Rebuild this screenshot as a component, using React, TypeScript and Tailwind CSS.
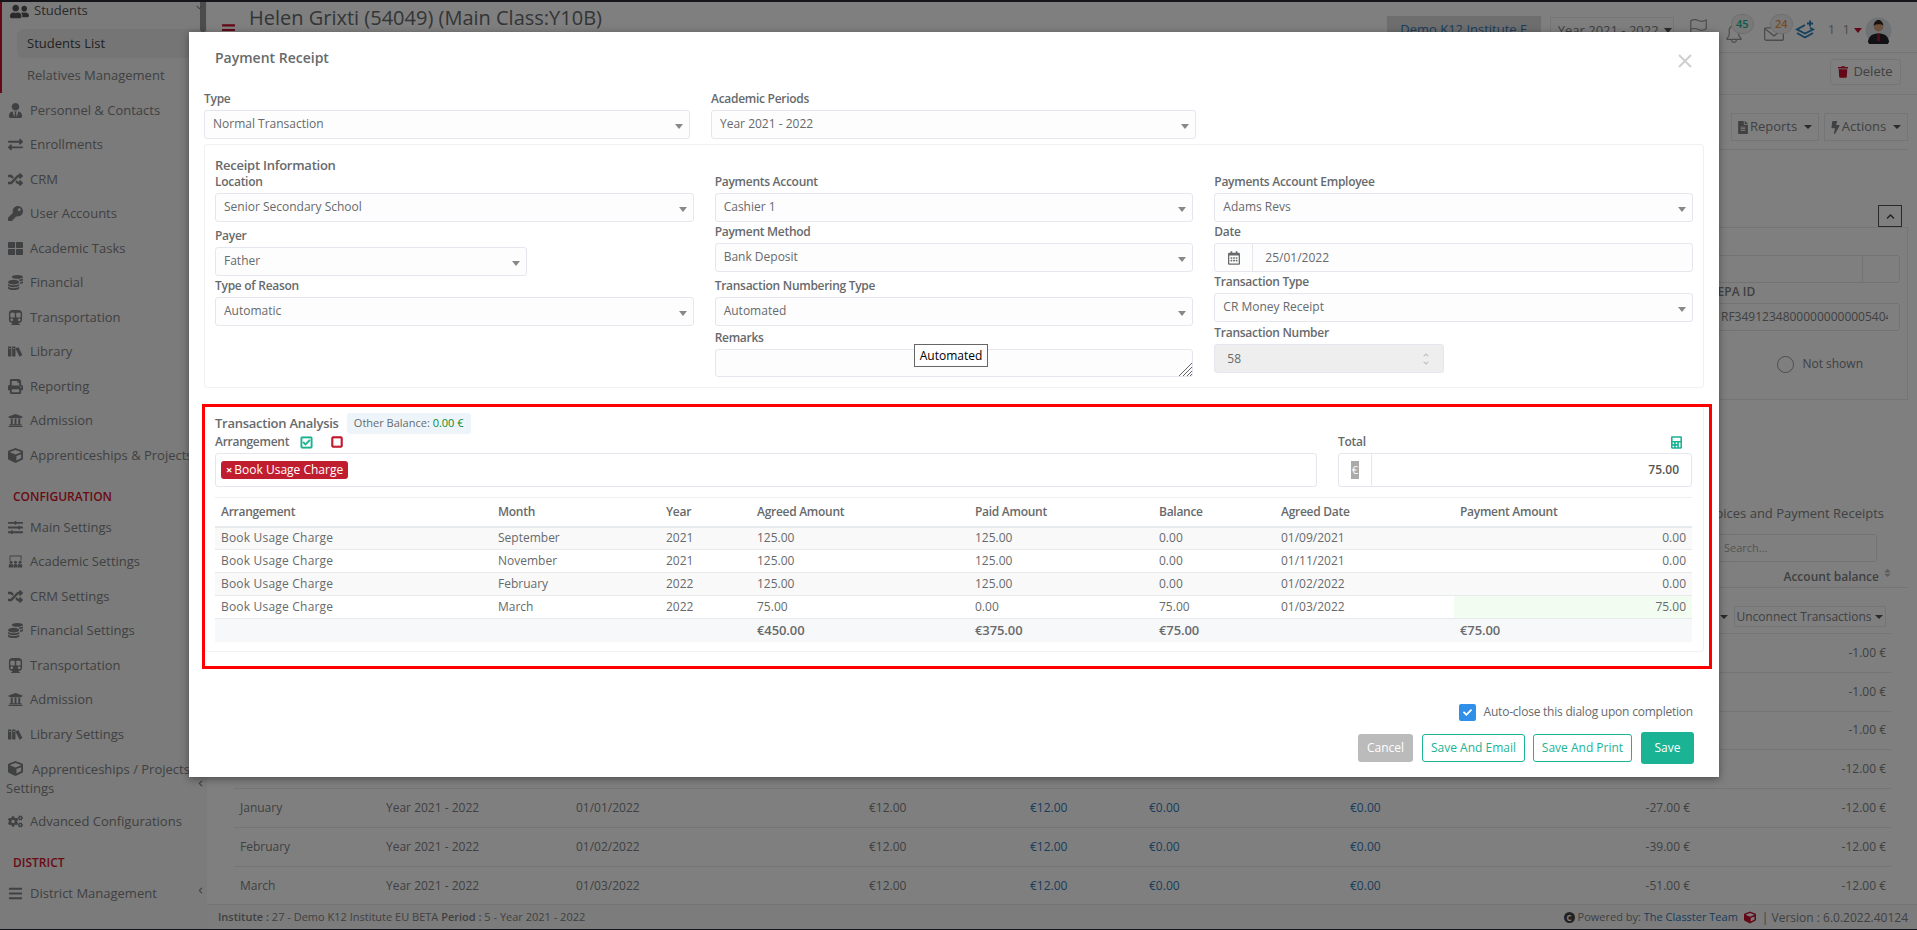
import React from 'react';
import {
  FaBars, FaBolt, FaCalculator, FaChevronDown, FaChevronLeft, FaChevronUp, FaCheck, FaCogs, FaCoins, FaCube,
  FaExchangeAlt, FaFileAlt, FaKey, FaPrint, FaRandom, FaRegCalendarAlt, FaRegCheckSquare,
  FaRegSquare, FaSlidersH, FaSort, FaSubway, FaThLarge, FaTrash, FaUniversity,
  FaUserFriends, FaUserTie,
} from 'react-icons/fa';
import { ImBooks } from 'react-icons/im';
import { SlBell, SlEnvolope, SlFlag } from 'react-icons/sl';

const ClassroomIcon = ({ className }: { className?: string }) => (
  <svg viewBox="0 0 20 18" className={className} fill="currentColor">
    <path d="M2 8V1h16v7h-1.2V2.2H3.2V8z" />
    <circle cx="4" cy="10" r="2" />
    <circle cx="10" cy="10" r="2" />
    <circle cx="16" cy="10" r="2" />
    <path d="M1 17v-3a2 2 0 0 1 2-1.5h2A2 2 0 0 1 7 14v3zM7.5 17v-3a2 2 0 0 1 2-1.5h1a2 2 0 0 1 2 1.5v3zM13 17v-3a2 2 0 0 1 2-1.5h2a2 2 0 0 1 2 1.5v3z" />
  </svg>
);

const LayersPlusIcon = ({ className }: { className?: string }) => (
  <svg viewBox="0 0 20 20" className={className} fill="none" stroke="currentColor" strokeWidth="1.8">
    <path d="M10 5L2 9.5l8 4 8-4-3-1.6" />
    <path d="M2 13l8 4.5 8-4.5" />
    <path d="M15 0.5v6M12 3.5h6" />
  </svg>
);

const mainItems = [
  { label: 'Personnel & Contacts', icon: FaUserTie },
  { label: 'Enrollments', icon: FaExchangeAlt },
  { label: 'CRM', icon: FaRandom },
  { label: 'User Accounts', icon: FaKey },
  { label: 'Academic Tasks', icon: FaThLarge },
  { label: 'Financial', icon: FaCoins },
  { label: 'Transportation', icon: FaSubway },
  { label: 'Library', icon: ImBooks },
  { label: 'Reporting', icon: FaPrint },
  { label: 'Admission', icon: FaUniversity },
  { label: 'Apprenticeships & Projects', icon: FaCube },
];

const configItems = [
  { label: 'Main Settings', icon: FaSlidersH },
  { label: 'Academic Settings', icon: ClassroomIcon },
  { label: 'CRM Settings', icon: FaRandom },
  { label: 'Financial Settings', icon: FaCoins },
  { label: 'Transportation', icon: FaSubway },
  { label: 'Admission', icon: FaUniversity },
  { label: 'Library Settings', icon: ImBooks },
];

const arrangementRows = [
  { month: 'September', year: '2021', agreed: '125.00', paid: '125.00', balance: '0.00', date: '01/09/2021', payment: '0.00' },
  { month: 'November', year: '2021', agreed: '125.00', paid: '125.00', balance: '0.00', date: '01/11/2021', payment: '0.00' },
  { month: 'February', year: '2022', agreed: '125.00', paid: '125.00', balance: '0.00', date: '01/02/2022', payment: '0.00' },
  { month: 'March', year: '2022', agreed: '75.00', paid: '0.00', balance: '75.00', date: '01/03/2022', payment: '75.00' },
];

const balanceRows = [
  { month: '', date: '', total: '', balance: '-1.00 €' },
  { month: '', date: '', total: '', balance: '-1.00 €' },
  { month: '', date: '', total: '', balance: '-1.00 €' },
  { month: '', date: '', total: '', balance: '-12.00 €' },
  { month: 'January', date: '01/01/2022', total: '-27.00 €', balance: '-12.00 €' },
  { month: 'February', date: '01/02/2022', total: '-39.00 €', balance: '-12.00 €' },
  { month: 'March', date: '01/03/2022', total: '-51.00 €', balance: '-12.00 €' },
];

const SideItem = ({ label, icon: Icon }: { label: string; icon: React.ComponentType<{ className?: string }> }) => (
  <div className="flex h-[34.5px] items-center pl-2 text-[13px] text-[#808284]">
    <Icon className="h-[15px] w-[15px] shrink-0" />
    <span className="ml-[7px] whitespace-nowrap">{label}</span>
  </div>
);

const SectionTitle = ({ children }: { children: React.ReactNode }) => (
  <div className="mt-[15px] mb-[5.5px] h-[17px] pl-[13px] text-[12px] leading-[17px] font-semibold text-[#d4152f]">{children}</div>
);

const Sidebar = () => (
  <aside className="relative w-[207px] shrink-0 overflow-hidden bg-[#f6f6f6]">
    <div className="absolute top-0 right-[1px] h-[32px] w-[6px] rounded-sm bg-[#999]" />
    <FaChevronDown className="absolute top-[4px] left-[196px] h-[7px] w-[7px] text-[#888]" />
    <FaChevronLeft className="absolute top-[780px] left-[197px] h-[7px] w-[7px] text-[#888]" />
    <FaChevronLeft className="absolute top-[887px] left-[197px] h-[7px] w-[7px] text-[#888]" />
    <div className="h-[93px] border-l-2 border-[#c8102e]">
      <div className="flex h-[29px] items-center pb-[7px] pl-2 text-[13px] text-[#555]">
        <FaUserFriends className="h-[17px] w-[19px] shrink-0" />
        <span className="ml-[5px]">Students</span>
      </div>
      <div className="ml-[15px] flex h-[29px] items-center rounded-l-md bg-[#ebebeb] pl-[10px] text-[13px] text-[#444]">Students List</div>
      <div className="flex h-[35px] items-center pl-[25px] text-[13px] text-[#808284]">Relatives Management</div>
    </div>
    {mainItems.map((item) => (
      <SideItem key={item.label} {...item} />
    ))}
    <SectionTitle>CONFIGURATION</SectionTitle>
    {configItems.map((item) => (
      <SideItem key={item.label} {...item} />
    ))}
    <div className="h-[53px] pt-[8px] pl-[6px] text-[13px] leading-[19px] text-[#808284]">
      <FaCube className="mr-[9px] ml-[2px] inline h-[15px] w-[15px] align-[-2px]" />
      Apprenticeships / Projects
      <br />
      Settings
    </div>
    <SideItem label="Advanced Configurations" icon={FaCogs} />
    <SectionTitle>DISTRICT</SectionTitle>
    <SideItem label="District Management" icon={FaBars} />
  </aside>
);

const Avatar = () => (
  <svg viewBox="0 0 28 28" className="h-[27px] w-[27px]">
    <circle cx="14" cy="14" r="13.5" fill="#dfe5ea" />
    <path d="M3 26c1-7 5-9 11-9s10 2 11 9a13 13 0 0 1-22 0z" fill="#20232b" />
    <path d="M13 17h2l.8 7-1.8 2-1.8-2z" fill="#b3122a" />
    <circle cx="14" cy="10" r="5" fill="#d9a27f" />
    <path d="M9 9c0-4 3-6 5-6s5 2 5 6c-2-2-7-2-10 0z" fill="#3a2418" />
  </svg>
);

const CountBadge = ({ value, className }: { value: string; className: string }) => (
  <span className={`absolute -top-[10px] left-[6px] flex h-[20px] w-[23px] items-center justify-center rounded-full border border-[#ddd] bg-[#f3f3f3] text-[11px] font-semibold ${className}`}>
    {value}
  </span>
);

const TopBar = () => (
  <header className="flex h-[53px] shrink-0 border-b border-[#e7eaec] bg-[#fefefe]">
    <FaBars className="mt-[22px] ml-[15px] h-[16px] w-[13px] text-[#c8102e]" />
    <h1 className="mt-[4px] ml-[14px] text-[20px] leading-[28px] whitespace-nowrap text-[#676a6c]">Helen Grixti (54049) (Main Class:Y10B)</h1>
    <div className="ml-auto flex items-start pr-[25px]">
      <div className="mt-[16px] flex h-[28px] w-[154px] items-center justify-center bg-[#ddd] text-[13px] text-[#337ab7]">Demo K12 Institute E</div>
      <div className="mt-[17px] ml-[9px] flex h-[27px] w-[124px] items-center border border-[#e7eaec] pl-[7px] text-[13px] text-[#808284]">
        Year 2021 - 2022
        <span className="ml-[5px] border-x-[4px] border-t-[5px] border-x-transparent border-t-[#555]" />
      </div>
      <SlFlag className="mt-[19px] ml-[14px] h-[19px] w-[21px] text-[#999]" />
      <div className="relative mt-[24px] ml-[16px] h-[20px] w-[20px]">
        <SlBell className="h-[20px] w-[18px] text-[#999]" />
        <CountBadge value="45" className="text-[#1ab394]" />
      </div>
      <div className="relative mt-[24px] ml-[19px] h-[20px] w-[20px]">
        <SlEnvolope className="h-[20px] w-[20px] text-[#999]" />
        <CountBadge value="24" className="text-[#f0913a]" />
      </div>
      <LayersPlusIcon className="mt-[20px] ml-[11px] h-[20px] w-[20px] text-[#2a80b9]" />
      <span className="mt-[20px] ml-[13px] text-[13px] tracking-[2px] text-[#999]">1 1</span>
      <span className="mt-[28px] ml-[2px] border-x-[4px] border-t-[5px] border-x-transparent border-t-[#c8102e]" />
      <div className="mt-[17px] ml-[3px]">
        <Avatar />
      </div>
    </div>
  </header>
);

const OutlineButton = ({ children, className }: { children: React.ReactNode; className: string }) => (
  <div className={`flex items-center justify-center border border-[#e7eaec] text-[13px] text-[#808284] ${className}`}>{children}</div>
);

const MainContent = () => (
  <main className="flex min-w-0 flex-1 flex-col bg-white">
    <TopBar />
    <div className="flex h-[42px] shrink-0 items-center justify-end border-b border-[#e7eaec] pr-[16px] pb-[4px]">
      <OutlineButton className="h-[26px] w-[71px] gap-[5px] rounded-[3px]">
        <FaTrash className="h-[12px] w-[10px] text-[#c8102e]" />
        Delete
      </OutlineButton>
    </div>
    <div className="min-h-0 flex-1 overflow-hidden pr-[9px] pl-[12px]">
      <div className="mt-[18px] flex h-[28px] justify-end gap-[5px]">
        <OutlineButton className="w-[88px] gap-[2px]">
          <FaFileAlt className="h-[13px] w-[10px]" />
          Reports
          <span className="ml-[5px] border-x-[4px] border-t-[4px] border-x-transparent border-t-[#555]" />
        </OutlineButton>
        <OutlineButton className="w-[84px] gap-[2px]">
          <FaBolt className="h-[13px] w-[9px]" />
          Actions
          <span className="ml-[5px] border-x-[4px] border-t-[4px] border-x-transparent border-t-[#555]" />
        </OutlineButton>
      </div>
      <div className="mt-[8px] border-t border-[#e7eaec]" />
      <div className="mt-[55px] flex justify-end pr-[6px]">
        <div className="flex h-[22px] w-[24px] items-center justify-center border border-[#555]">
          <FaChevronUp className="h-[9px] w-[9px] text-[#444]" />
        </div>
      </div>
      <div className="relative h-[173px] overflow-hidden border border-[#e7eaec]">
        <div className="mt-[27px] mr-[7px] ml-auto flex h-[28px] w-[280px] justify-end rounded-[3px] border border-[#e5e6e7]">
          <div className="w-[37px] border-l border-[#e5e6e7]" />
        </div>
        <div className="mt-[2px] mr-[7px] ml-auto w-[189px] text-[12px] leading-[14px] font-semibold text-[#808284]">SEPA ID</div>
        <div className="mt-[4px] mr-[7px] ml-auto flex h-[28px] w-[190px] items-center rounded-[3px] border border-[#e5e6e7] pl-[10px] text-[12px] whitespace-nowrap text-[#808284]">
          <span className="w-[167px] overflow-hidden">RF34912348000000000005404</span>
        </div>
        <div className="mt-[24px] mr-[44px] flex items-center justify-end gap-[8px] text-[12px] text-[#808284]">
          <span className="h-[17px] w-[17px] rounded-full border border-[#999]" />
          Not shown
        </div>
      </div>
      <div className="mt-[104px] pr-[24px] text-right text-[13px] leading-[18px] text-[#808284]">Invoices and Payment Receipts</div>
      <div className="mt-[12px] flex justify-end pr-[31px]">
        <div className="flex h-[28px] w-[300px] items-center rounded-[3px] border border-[#e5e6e7] pl-[8px] text-[11px] text-[#aaa]">
          <span className="ml-auto w-[152px]">Search...</span>
        </div>
      </div>
      <div className="mt-[7px] flex h-[19px] items-start justify-end border-b border-[#e7eaec] pr-[17px] text-[12px] leading-[16px] font-semibold text-[#808284]">
        Account balance
        <FaSort className="mt-[-1px] ml-[5px] h-[10px] w-[7px] text-[#bbb]" />
      </div>
      <div className="mt-[18px] flex justify-end pr-[22px]">
        <span className="mt-[9px] mr-[6px] border-x-[4px] border-t-[4px] border-x-transparent border-t-[#555]" />
        <div className="flex h-[21px] w-[152px] items-center justify-center gap-[4px] border border-[#e7eaec] text-[12px] text-[#808284]">
          Unconnect Transactions
          <span className="border-x-[4px] border-t-[4px] border-x-transparent border-t-[#555]" />
        </div>
      </div>
      <div className="mt-[6px] mr-[17px] ml-[15px] border-t border-[#e7eaec]">
        {balanceRows.map((row, i) => (
          <div key={i} className="grid h-[38.8px] grid-cols-[152px_190px_293px_161px_119px_201px_340px_196px] items-center border-b border-[#e7eaec] text-[12px] text-[#808284]">
            <span className="pl-[6px]">{row.month}</span>
            <span>{row.month && 'Year 2021 - 2022'}</span>
            <span>{row.date}</span>
            <span>{row.month && '€12.00'}</span>
            <span className="text-[#337ab7]">{row.month && '€12.00'}</span>
            <span className="text-[#337ab7]">{row.month && '€0.00'}</span>
            <span className="flex justify-between">
              <span className="text-[#337ab7]">{row.month && '€0.00'}</span>
              <span>{row.total}</span>
            </span>
            <span className="text-right">{row.balance}</span>
          </div>
        ))}
      </div>
    </div>
    <footer className="flex h-[26px] shrink-0 items-center border-t border-[#e7eaec] bg-[#f9f9f9] pr-[9px] pl-[11px] text-[11px] text-[#808284]">
      <span>
        <b className="font-semibold">Institute :</b> 27 - Demo K12 Institute EU BETA <b className="font-semibold">Period :</b> 5 - Year 2021 - 2022
      </span>
      <span className="ml-auto flex items-center whitespace-nowrap">
        <span className="mr-[3px] flex h-[11px] w-[11px] items-center justify-center rounded-full bg-[#444] text-[8px] leading-none font-bold text-white">C</span>
        Powered by:&nbsp;<span className="text-[#337ab7]">The Classter Team</span>
        <FaCube className="mx-[6px] h-[13px] w-[12px] text-[#c8102e]" />
        <span className="text-[12px]">| Version : 6.0.2022.40124</span>
      </span>
    </footer>
  </main>
);

const Label = ({ children, className = '' }: { children: React.ReactNode; className?: string }) => (
  <div className={`mb-[4px] h-[14px] text-[12px] leading-[14px] font-semibold tracking-[-0.28px] whitespace-nowrap text-[#676a6c] ${className}`}>{children}</div>
);

const SelectBox = ({ value, className = '' }: { value: string; className?: string }) => (
  <div className={`flex h-[29px] items-center rounded-[3px] border border-[#e5e6ee] bg-[#fdfdfd] pr-[6px] pl-[8px] text-[12px] text-[#676a6c] ${className}`}>
    <span className="mb-[2px]">{value}</span>
    <span className="mt-[4px] ml-auto border-x-[4px] border-t-[5px] border-x-transparent border-t-[#888]" />
  </div>
);

const Field = ({ label, value, className = '' }: { label: string; value: string; className?: string }) => (
  <div className={className}>
    <Label>{label}</Label>
    <SelectBox value={value} />
  </div>
);

const TransactionAnalysis = () => (
  <section className="mx-[15px] mt-[16px] h-[248px] rounded-[3px] border border-[#f0f1f3] px-[10px] pt-[8px]">
    <div className="flex h-[21px] items-center">
      <span className="text-[13px] font-semibold tracking-[-0.25px] text-[#676a6c]">Transaction Analysis</span>
      <span className="ml-[8px] flex h-[21px] w-[124px] items-center justify-center rounded-[3px] bg-[#eef5fa] text-[11px] text-[#676a6c]">
        Other Balance:&nbsp;<span className="text-[#098a2d]">0.00 €</span>
      </span>
    </div>
    <div className="grid grid-cols-[1102px_354px] gap-x-[21px]">
      <div>
        <div className="mb-[3px] flex h-[16px] items-center text-[12px] font-semibold tracking-[-0.28px] text-[#676a6c]">
          Arrangement
          <FaRegCheckSquare stroke="currentColor" strokeWidth={25} className="ml-[11px] h-[13px] w-[13px] text-[#1ab394]" />
          <FaRegSquare stroke="currentColor" strokeWidth={40} className="ml-[18px] h-[12px] w-[12px] text-[#c0152b]" />
        </div>
        <div className="flex h-[34px] items-center rounded-[3px] border border-[#e5e6ee] pl-[5px]">
          <span className="flex h-[18px] items-center rounded-[3px] bg-[#c01d2e] pr-[5px] pl-[5px] text-[12px] text-white">
            <span className="mr-[2px] text-[11px] font-bold">×</span>Book Usage Charge
          </span>
        </div>
      </div>
      <div>
        <div className="mb-[3px] flex h-[16px] items-center justify-between pr-[10px] text-[12px] font-semibold tracking-[-0.28px] text-[#676a6c]">
          Total
          <FaCalculator className="h-[13px] w-[11px] text-[#1ab394]" />
        </div>
        <div className="flex h-[34px] items-center rounded-[3px] border border-[#e5e6ee]">
          <div className="flex h-full w-[33px] items-center justify-center border-r border-[#e5e6ee]">
            <span className="flex h-[18px] w-[8px] items-center justify-center bg-[#aaa] text-[11px] text-white">€</span>
          </div>
          <span className="ml-auto pr-[12px] text-[12px] font-semibold text-[#555]">75.00</span>
        </div>
      </div>
    </div>
    <table className="mt-[10px] w-[1477px] table-fixed border-t border-[#eef0f2] text-left text-[12px] text-[#676a6c]">
      <thead className="tracking-[-0.28px]">
        <tr className="h-[29px] border-b-2 border-[#e7eaec]">
          <th className="w-[277px] pl-[6px] font-semibold">Arrangement</th>
          <th className="w-[168px] pl-[6px] font-semibold">Month</th>
          <th className="w-[91px] pl-[6px] font-semibold">Year</th>
          <th className="w-[218px] pl-[6px] font-semibold">Agreed Amount</th>
          <th className="w-[184px] pl-[6px] font-semibold">Paid Amount</th>
          <th className="w-[122px] pl-[6px] font-semibold">Balance</th>
          <th className="w-[179px] pl-[6px] font-semibold">Agreed Date</th>
          <th className="pl-[6px] font-semibold">Payment Amount</th>
        </tr>
      </thead>
      <tbody>
        {arrangementRows.map((row, i) => (
          <tr key={row.month} className={`h-[23px] border-b border-[#e7eaec] ${i % 2 === 0 ? 'bg-[#f9f9f9]' : 'bg-white'}`}>
            <td className="pl-[6px] tracking-[0.2px]">Book Usage Charge</td>
            <td className="pl-[6px]">{row.month}</td>
            <td className="pl-[6px]">{row.year}</td>
            <td className="pl-[6px]">{row.agreed}</td>
            <td className="pl-[6px]">{row.paid}</td>
            <td className="pl-[6px]">{row.balance}</td>
            <td className="pl-[6px]">{row.date}</td>
            <td className={`pr-[6px] text-right ${i === 3 ? 'bg-[#f3fcf0]' : ''}`}>{row.payment}</td>
          </tr>
        ))}
        <tr className="h-[23px] bg-[#f7f8fa] text-[13px] font-semibold tracking-[-0.1px]">
          <td colSpan={3} />
          <td className="pl-[6px]">€450.00</td>
          <td className="pl-[6px]">€375.00</td>
          <td className="pl-[6px]">€75.00</td>
          <td />
          <td className="pl-[6px]">€75.00</td>
        </tr>
      </tbody>
    </table>
  </section>
);

const PaymentDialog = () => (
  <div className="absolute top-[32px] left-[189px] flex h-[745px] w-[1530px] flex-col bg-white shadow-[0_2px_8px_rgba(0,0,0,0.4)]">
    <div className="flex h-[60px] items-start pt-[17px] pr-[27px] pl-[26px]">
      <h2 className="text-[14px] leading-[18px] font-semibold text-[#676a6c]">Payment Receipt</h2>
      <svg viewBox="0 0 14 14" className="mt-[5px] ml-auto h-[14px] w-[14px]" stroke="#cfcfcf" strokeWidth="2" fill="none">
        <path d="M1 1l12 12M13 1L1 13" />
      </svg>
    </div>
    <div className="flex gap-[21px] pl-[15px]">
      <Field label="Type" value="Normal Transaction" className="w-[486px]" />
      <Field label="Academic Periods" value="Year 2021 - 2022" className="w-[485px]" />
    </div>
    <section className="relative mx-[15px] mt-[5px] h-[244px] rounded-[3px] border border-[#f0f1f3] px-[10px]">
      <h3 className="pt-[12px] text-[13px] leading-[16px] font-semibold tracking-[-0.25px] text-[#676a6c]">Receipt Information</h3>
      <div className="mt-[2px] grid grid-cols-3 gap-x-[21px]">
        <div>
          <Field label="Location" value="Senior Secondary School" />
          <Field label="Payer" value="Father" className="mt-[7px] w-[312px]" />
          <Field label="Type of Reason" value="Automatic" className="mt-[3px]" />
        </div>
        <div>
          <Field label="Payments Account" value="Cashier 1" />
          <Field label="Payment Method" value="Bank Deposit" className="mt-[3px]" />
          <Field label="Transaction Numbering Type" value="Automated" className="mt-[7px]" />
          <Label className="mt-[5px]">Remarks</Label>
          <div className="relative h-[28px]">
            <textarea readOnly className="block h-[28px] w-full resize-none rounded-[3px] border border-[#e5e6ee] bg-[#fdfdfd]" />
            <svg viewBox="0 0 14 14" className="absolute right-[1px] bottom-[1px] h-[14px] w-[14px]" stroke="#666" strokeWidth="1" fill="none">
              <path d="M1 14L14 1M5 14L14 5M9 14l5-5M12 14l2-2" />
            </svg>
          </div>
        </div>
        <div>
          <Field label="Payments Account Employee" value="Adams Revs" />
          <Label className="mt-[3px]">Date</Label>
          <div className="flex h-[29px] items-center rounded-[3px] border border-[#e5e6ee] bg-[#fdfdfd] text-[12px] text-[#676a6c]">
            <div className="flex h-full w-[38px] items-center justify-center border-r border-[#e5e6ee]">
              <FaRegCalendarAlt className="h-[14px] w-[12px]" />
            </div>
            <span className="ml-[12px]">25/01/2022</span>
          </div>
          <Field label="Transaction Type" value="CR Money Receipt" className="mt-[3px]" />
          <Label className="mt-[4px]">Transaction Number</Label>
          <div className="flex h-[29px] w-[230px] items-center rounded-[3px] border border-[#e5e6ee] bg-[#eeeeee] pr-[13px] pl-[12px] text-[12px] text-[#676a6c]">
            58
            <div className="ml-auto flex flex-col gap-[2px] text-[#bbb]">
              <FaChevronUp className="h-[6px] w-[8px]" />
              <FaChevronDown className="h-[6px] w-[8px]" />
            </div>
          </div>
        </div>
      </div>
      <div className="absolute top-[199px] left-[709px] flex h-[23px] w-[74px] items-center justify-center border border-[#666] bg-white text-[12px] text-black">Automated</div>
    </section>
    <TransactionAnalysis />
    <div className="mt-[51px] flex items-center justify-end pr-[26px] text-[12px] tracking-[-0.22px] text-[#676a6c]">
      <span className="flex h-[17px] w-[17px] items-center justify-center rounded-[2px] bg-[#2f8fe9] text-white">
        <FaCheck className="h-[9px] w-[9px]" />
      </span>
      <span className="ml-[8px]">Auto-close this dialog upon completion</span>
    </div>
    <div className="mt-[11px] flex items-center justify-end pr-[25px] text-[12px]">
      <div className="flex h-[28px] w-[55px] items-center justify-center rounded-[3px] bg-[#bbbbbb] text-white">Cancel</div>
      <div className="ml-[9px] flex h-[28px] w-[103px] items-center justify-center rounded-[3px] border border-[#1ab394] text-[#1ab394]">Save And Email</div>
      <div className="ml-[8px] flex h-[28px] w-[99px] items-center justify-center rounded-[3px] border border-[#1ab394] text-[#1ab394]">Save And Print</div>
      <div className="ml-[9px] flex h-[32px] w-[53px] items-center justify-center rounded-[3px] bg-[#1ab394] text-white">Save</div>
    </div>
    <div className="pointer-events-none absolute top-[372px] left-[13px] h-[265px] w-[1510px] border-[3px] border-[#ff0000]" />
  </div>
);

export default function App() {
  return (
    <div className="relative flex h-[930px] w-full overflow-hidden font-['Open_Sans',sans-serif]">
      <Sidebar />
      <MainContent />
      <div className="absolute inset-0 bg-black/50" />
      <div className="absolute inset-x-0 top-0 h-[2px] bg-[#15161a]" />
      <div className="absolute inset-x-0 bottom-0 h-[1px] bg-[#15161a]" />
      <PaymentDialog />
    </div>
  );
}
